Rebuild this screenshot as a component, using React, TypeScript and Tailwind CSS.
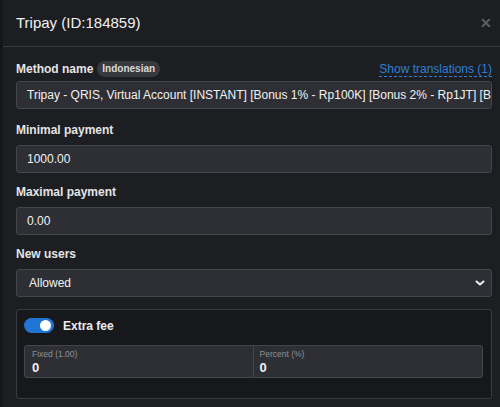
import React from "react";

function Field({ label, value }: { label: string; value: string }) {
  return (
    <div className="flex flex-col">
      <label className="text-[12px] font-bold text-[#e4e4e6] mb-[7px] leading-[16px]">{label}</label>
      <div className="h-[28px] rounded-[3px] border border-[#45464c] bg-[#2e2f34] px-[10px] flex items-center text-[12px] text-[#f2f2f2] overflow-hidden whitespace-nowrap">
        {value}
      </div>
    </div>
  );
}

export default function App() {
  return (
    <div className="w-[500px] h-[407px] bg-[#151619] pl-[3px] overflow-hidden font-[family-name:'Liberation_Sans',Arial,sans-serif]">
      <div className="h-full bg-[#1d1e22] flex flex-col">
        <div className="h-[47px] border-b border-[#3b3c41] flex items-center justify-between pl-[13px] pr-[8px]">
          <h1 className="text-[15px] text-[#f0f0f0] font-normal">Tripay (ID:184859)</h1>
          <span className="text-[#5d5e63] text-[14px] font-bold leading-none">✕</span>
        </div>
        <div className="flex flex-col gap-[11px] pl-[13px] pr-[8px] pt-[13px]">
          <div className="flex flex-col mb-[2px]">
            <div className="flex items-center justify-between mb-[3px]">
              <div className="flex items-center gap-[4px]">
                <span className="text-[12px] font-bold text-[#e4e4e6]">Method name</span>
                <span className="rounded-full bg-[#393a40] text-[#d8d8da] text-[10px] font-bold px-[5px] py-[2px] leading-[12px]">Indonesian</span>
              </div>
              <span className="text-[12px] text-[#2f7fd6] border-b border-dashed border-[#2f7fd6] leading-[14px]">Show translations (1)</span>
            </div>
            <div className="h-[28px] rounded-[3px] border border-[#45464c] bg-[#2e2f34] px-[10px] flex items-center text-[12px] text-[#f2f2f2] overflow-hidden whitespace-nowrap">
              Tripay - QRIS, Virtual Account [INSTANT] [Bonus 1% - Rp100K] [Bonus 2% - Rp1JT] [Bonus 3% - Rp5JT]
            </div>
          </div>
          <Field label="Minimal payment" value="1000.00" />
          <Field label="Maximal payment" value="0.00" />
          <div className="flex flex-col">
            <label className="text-[12px] font-bold text-[#e4e4e6] mb-[7px] leading-[16px]">New users</label>
            <div className="h-[28px] rounded-[3px] border border-[#45464c] bg-[#2e2f34] pl-[12px] pr-[5px] flex items-center justify-between text-[12px] text-[#f2f2f2]">
              <span>Allowed</span>
              <svg width="12" height="12" viewBox="0 0 12 12" fill="none">
                <path d="M2.5 4.5 6 7.5l3.5-3" stroke="#f2f2f2" strokeWidth="2" strokeLinecap="round" strokeLinejoin="round" />
              </svg>
            </div>
          </div>
          <div className="mt-[1px] rounded-[3px] border border-[#3a3b40] bg-[#17181b] pl-[7px] pr-[8px] pt-[8px] pb-[20px] flex flex-col gap-[12px]">
            <div className="flex items-center gap-[9px] h-[15px]">
              <div className="w-[30px] h-[15px] rounded-full bg-[#1f74d4] flex items-center justify-end pr-[3px]">
                <div className="w-[11px] h-[11px] rounded-full bg-white" />
              </div>
              <span className="text-[12px] font-bold text-[#ececee]">Extra fee</span>
            </div>
            <div className="grid grid-cols-2 rounded-[3px] border border-[#45464c] bg-[#2e2f34] h-[33px]">
              <div className="flex flex-col px-[7px] pt-[3px] border-r border-[#45464c]">
                <span className="text-[8.5px] text-[#8e8f94] leading-[11px]">Fixed (1.00)</span>
                <span className="text-[13px] font-bold text-[#f2f2f2] leading-[15px]">0</span>
              </div>
              <div className="flex flex-col px-[6px] pt-[3px]">
                <span className="text-[8.5px] text-[#8e8f94] leading-[11px]">Percent (%)</span>
                <span className="text-[13px] font-bold text-[#f2f2f2] leading-[15px]">0</span>
              </div>
            </div>
          </div>
        </div>
      </div>
    </div>
  );
}
